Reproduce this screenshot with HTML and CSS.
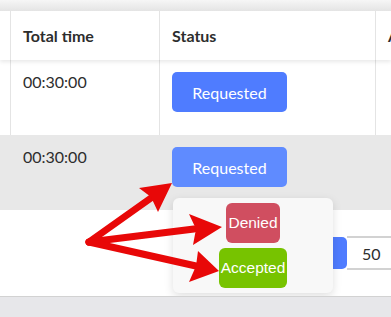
FILE: index.html
```html
<!DOCTYPE html>
<html lang="en">
<head>
    <meta charset="UTF-8">
    <meta name="viewport" content="width=device-width, initial-scale=1.0">
    <title>Requests</title>
    <link rel="stylesheet" href="styles.css">
</head>
<body>
    <div class="topbar"></div>
    <div class="card">
        <div class="row head">
            <div class="cell c0"></div>
            <div class="cell c1">Total time</div>
            <div class="cell c2">Status</div>
            <div class="cell c3">A</div>
        </div>
        <div class="row">
            <div class="cell c0"></div>
            <div class="cell c1">00:30:00</div>
            <div class="cell c2"><button class="status">Requested</button></div>
            <div class="cell c3"></div>
        </div>
        <div class="row hover">
            <div class="cell c0"></div>
            <div class="cell c1">00:30:00</div>
            <div class="cell c2 has-menu">
                <button class="status">Requested</button>
                <!-- dropdown for changing the status -->
                <div class="menu">
                    <button class="opt denied">Denied</button>
                    <button class="opt accepted">Accepted</button>
                </div>
            </div>
            <div class="cell c3"></div>
        </div>
        <div class="footer">
            <div class="pager">
                <button class="go"></button>
                <input class="size" type="text" value="50">
            </div>
        </div>
    </div>
    <div class="bottom"></div>

    <!-- red annotation arrows -->
    <svg class="arrows" width="391" height="317" viewBox="0 0 391 317">
        <g stroke="#e80808" stroke-width="7" stroke-linecap="round">
            <line x1="89" y1="242" x2="151" y2="198"/>
            <line x1="89" y1="242" x2="194" y2="229"/>
            <line x1="89" y1="242" x2="196" y2="266"/>
        </g>
        <g fill="#e80808">
            <polygon points="172,183 139,188 151,197 158,212"/>
            <polygon points="222,227 189,214 196,229 193,245"/>
            <polygon points="219,271 198,251 196,266 189,282"/>
        </g>
    </svg>
</body>
</html>
```

FILE: styles.css
```css
/* page */
body {
    margin: 0;
    background: #e7e7ea;
    font-family: Lato, "Liberation Sans", sans-serif;
    color: #2d2d2d;
    overflow: hidden;
    position: relative;
    width: 391px;
    height: 317px;
}

.topbar {
    height: 11px;
    background: linear-gradient(to bottom, #f6f6f6, #e4e4e4);
}

.card {
    background: white;
    border-bottom: 1px solid #d2d2d2;
    overflow: hidden;
}

/* table rows */
.row {
    display: flex;
    height: 75px;
    font-size: 16px;
    line-height: 20px;
}

.row.head {
    height: 49px;
    font-weight: bold;
    position: relative;
    z-index: 1;
    box-shadow: 0 2px 4px rgba(0, 0, 0, 0.09);
}

.row.hover {
    background: #e8e8e8;
}

.cell {
    box-sizing: border-box;
    padding: 12px 12px 0;
    border-left: 1px solid #e4e4e4;
    flex-shrink: 0;
}

.head .cell {
    padding-top: 0;
    display: flex;
    align-items: center;
}

.hover .cell {
    border-left-color: transparent;
}

.c0 { width: 10px; border-left: none; padding: 0; }
.c1 { width: 149px; }
.c2 { width: 216px; }
.c3 { width: 16px; white-space: nowrap; }

.status {
    display: block;
    width: 115px;
    height: 40px;
    border: none;
    border-radius: 5px;
    background: #4f7cff;
    color: white;
    font-family: Lato, sans-serif;
    font-size: 16px;
    padding: 0;
}

.hover .status {
    background: #5f8bff;
}

/* status dropdown */
.has-menu {
    position: relative;
}

.menu {
    position: absolute;
    left: 13px;
    top: 63px;
    z-index: 2;
    width: 160px;
    box-sizing: border-box;
    padding: 5px 0;
    display: flex;
    flex-direction: column;
    align-items: center;
    gap: 5px;
    background: #f8f8f8;
    border-radius: 6px;
    box-shadow: 0 3px 10px rgba(0, 0, 0, 0.13);
}

.opt {
    height: 40px;
    border: none;
    border-radius: 6px;
    padding: 0 2px;
    color: white;
    font-family: "Liberation Sans", Arial, sans-serif;
    font-size: 15.5px;
}

.denied { background: #d04e60; }
.accepted { background: #77c300; }

/* pagination */
.footer {
    height: 86px;
    display: flex;
    align-items: center;
    padding-left: 297px;
}

.pager {
    display: flex;
    align-items: center;
}

.go {
    width: 50px;
    height: 32px;
    border: none;
    border-radius: 0 5px 5px 0;
    background: #4f7cff;
    flex-shrink: 0;
}

.size {
    width: 44px;
    height: 34px;
    box-sizing: border-box;
    border: none;
    border-top: 2px solid #d2d2d2;
    border-bottom: 2px solid #d2d2d2;
    padding: 0 0 0 15px;
    font-family: Lato, sans-serif;
    font-size: 16px;
    color: #2d2d2d;
    outline: none;
}

.bottom {
    height: 20px;
}

.arrows {
    position: absolute;
    left: 0;
    top: 0;
    z-index: 5;
    pointer-events: none;
}
```
